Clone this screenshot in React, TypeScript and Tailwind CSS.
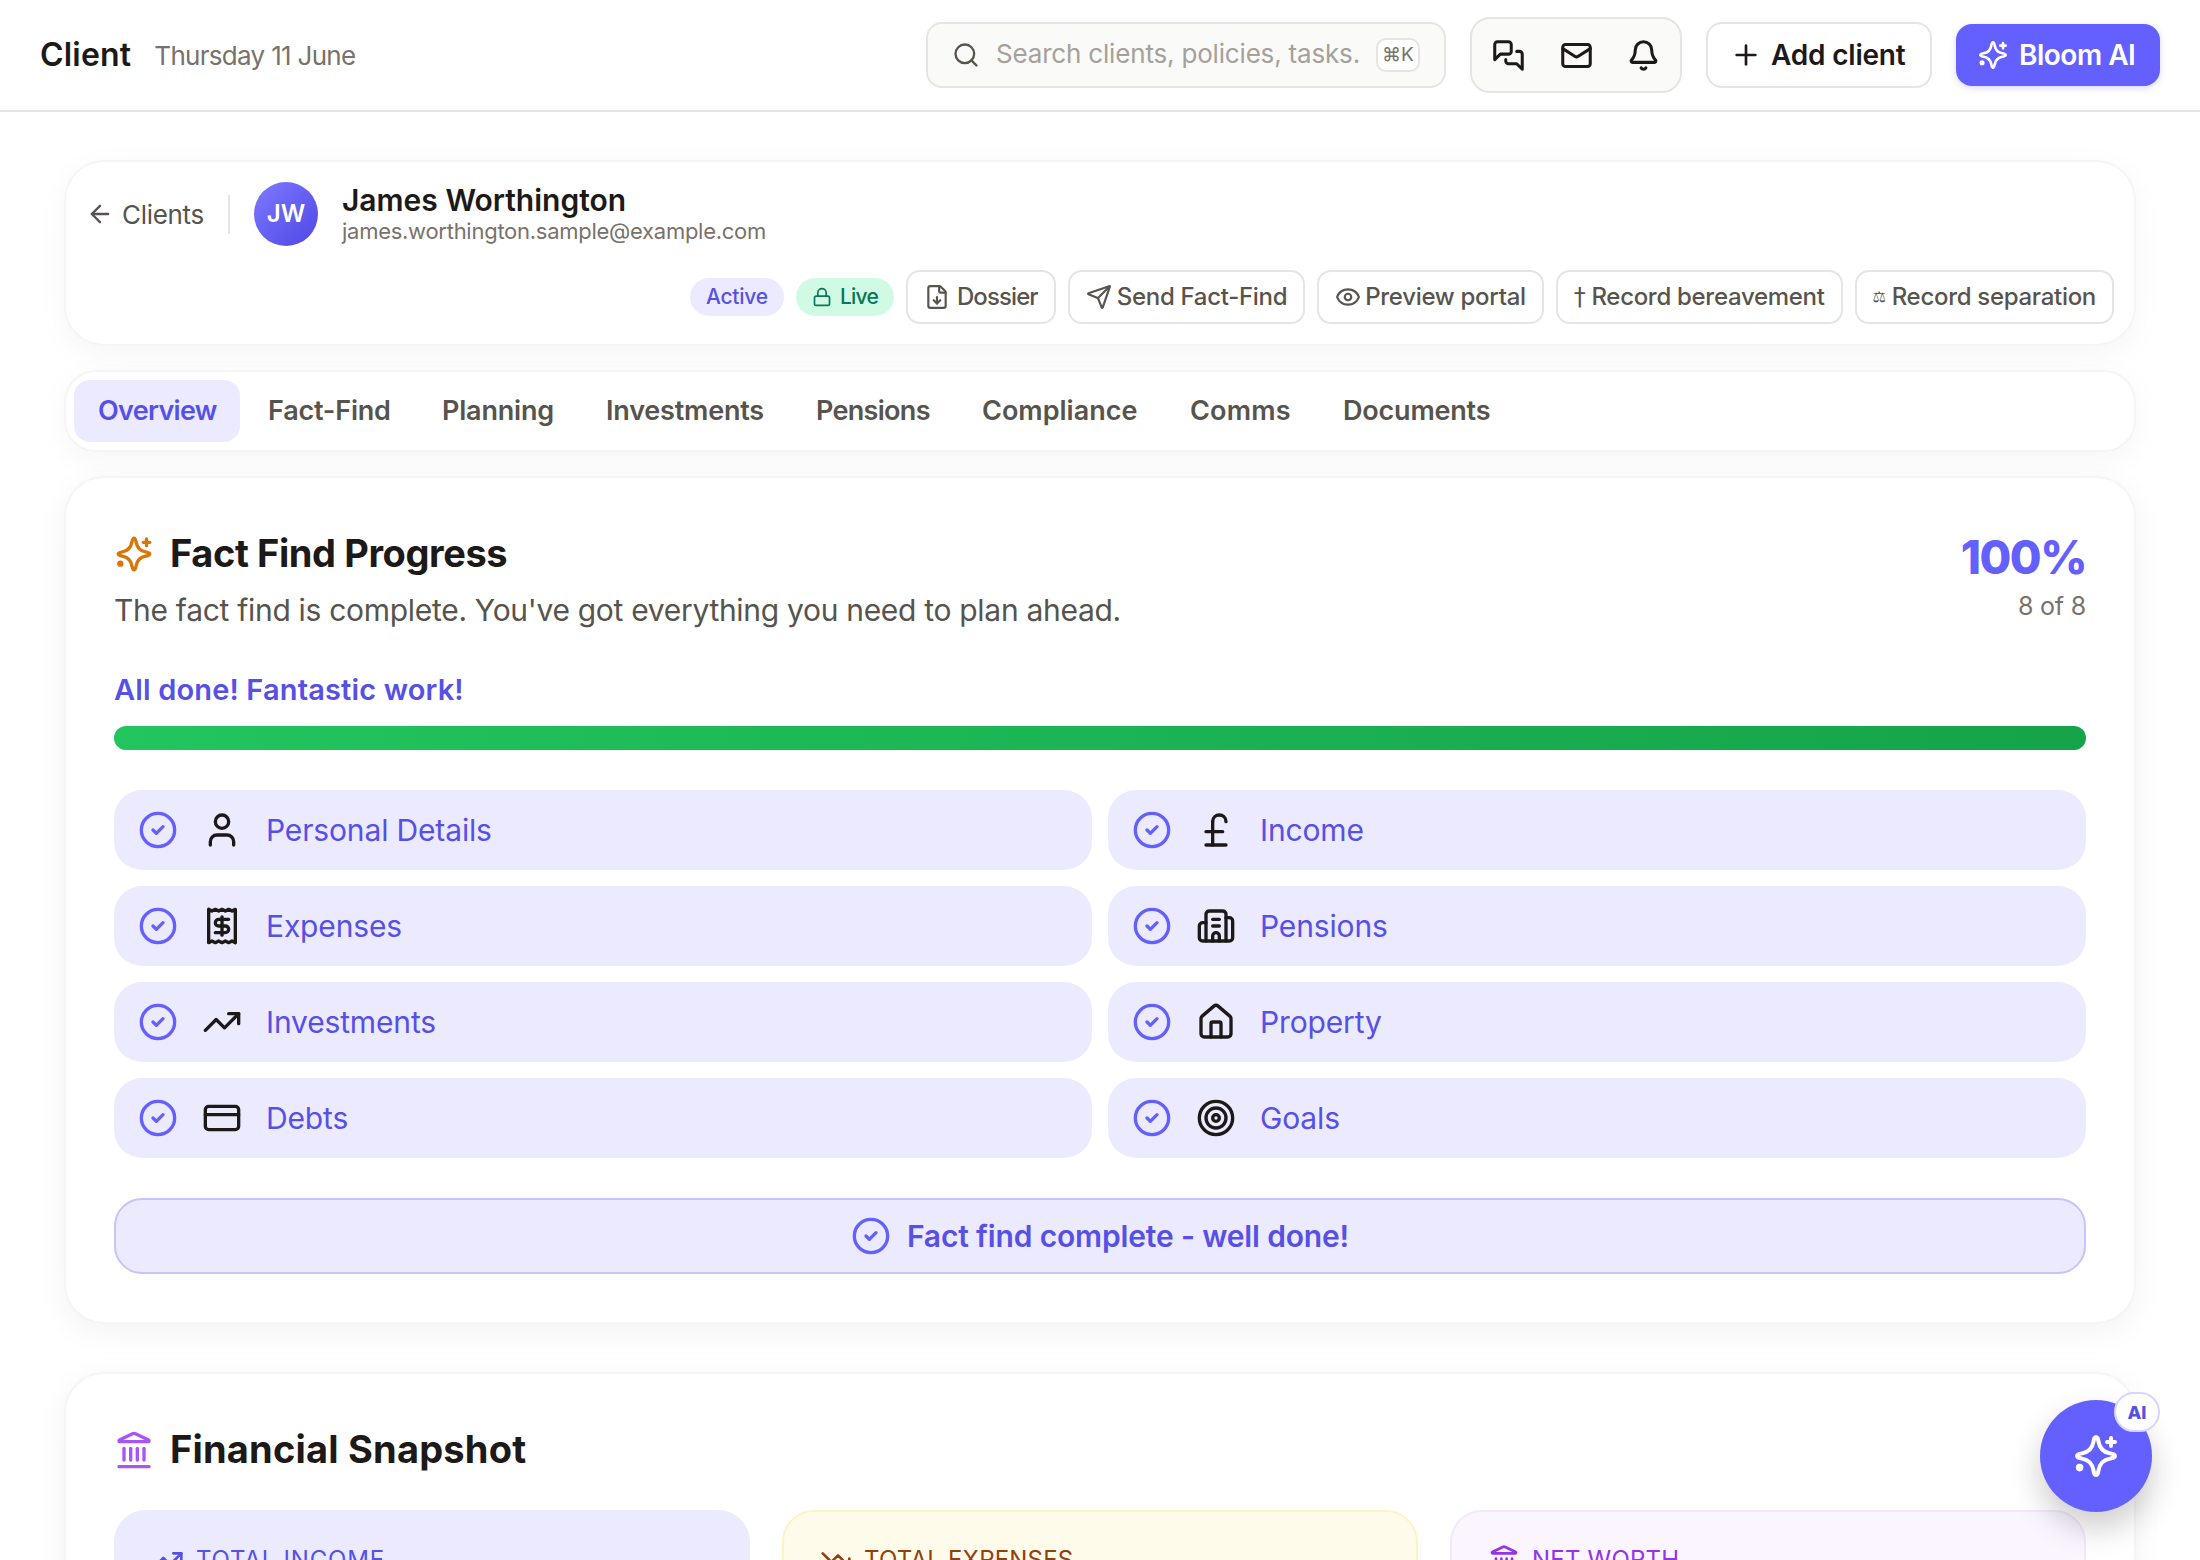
import {
  ArrowLeft,
  Bell,
  Building2,
  CircleCheck,
  CreditCard,
  Eye,
  FileDown,
  House,
  Landmark,
  Lock,
  Mail,
  Plus,
  PoundSterling,
  Receipt,
  Search,
  Send,
  Target,
  TrendingDown,
  TrendingUp,
  User,
} from "lucide-react";

const tabs = [
  { name: "Overview", width: "w-[166px]", track: "tracking-[-0.7px]" },
  { name: "Fact-Find", width: "w-[170px]", track: "tracking-[-0.2px]" },
  { name: "Planning", width: "w-[160px]", track: "tracking-[-0.2px]" },
  { name: "Investments", width: "w-[206px]", track: "tracking-[-0.2px]" },
  { name: "Pensions", width: "w-[162px]", track: "tracking-[-0.7px]" },
  { name: "Compliance", width: "w-[204px]", track: "tracking-[0px]" },
  { name: "Comms", width: "w-[149px]", track: "tracking-[0.2px]" },
  { name: "Documents", width: "w-[196px]", track: "tracking-[-0.2px]" },
];

const sections = [
  { name: "Personal Details", icon: User },
  { name: "Income", icon: PoundSterling },
  { name: "Expenses", icon: Receipt },
  { name: "Pensions", icon: Building2 },
  { name: "Investments", icon: TrendingUp },
  { name: "Property", icon: House },
  { name: "Debts", icon: CreditCard },
  { name: "Goals", icon: Target },
];

const btn =
  "flex h-[54px] items-center rounded-[14px] border-2 border-stone-200 bg-white px-4 text-[24px] font-medium tracking-[-0.3px] text-stone-600";

function Spark({ className }: { className?: string }) {
  return (
    <svg viewBox="0 0 24 24" fill="none" stroke="currentColor" strokeWidth={2} strokeLinecap="round" strokeLinejoin="round" className={className}>
      <path d="M12 2.5C12.8 2.5 13 3.5 13.3 5C13.9 8.3 15.7 10.1 19 10.7C20.5 11 21.5 11.2 21.5 12C21.5 12.8 20.5 13 19 13.3C15.7 13.9 13.9 15.7 13.3 19C13 20.5 12.8 21.5 12 21.5C11.2 21.5 11 20.5 10.7 19C10.1 15.7 8.3 13.9 5 13.3C3.5 13 2.5 12.8 2.5 12C2.5 11.2 3.5 11 5 10.7C8.3 10.1 10.1 8.3 10.7 5C11 3.5 11.2 2.5 12 2.5Z" />
      <path d="M19.5 3v4M17.5 5h4" />
      <circle cx="3.8" cy="17.8" r="0.9" fill="currentColor" />
    </svg>
  );
}

function Chats({ className }: { className?: string }) {
  return (
    <svg viewBox="0 0 24 24" fill="none" stroke="currentColor" strokeWidth={2.2} strokeLinecap="round" strokeLinejoin="round" className={className}>
      <path d="M14 9a2 2 0 0 1-2 2H6l-4 4V4c0-1.1.9-2 2-2h8a2 2 0 0 1 2 2v5Z" />
      <path d="M18 9h2a2 2 0 0 1 2 2v11l-4-4h-6a2 2 0 0 1-2-2v-1" />
    </svg>
  );
}

export default function App() {
  return (
    <div className="relative h-[1560px] overflow-hidden bg-white font-['Inter',sans-serif] text-stone-900">
      <header className="flex h-[112px] items-center justify-between border-b-2 border-stone-200 px-10">
        <div className="flex items-center gap-[23px]">
          <h1 className="text-[32px] font-semibold tracking-[0.2px]">Client</h1>
          <span className="text-[26px] tracking-[-0.7px] text-stone-500">Thursday 11 June</span>
        </div>
        <div className="flex items-center gap-6">
          <div className="flex h-[66px] w-[520px] items-center rounded-2xl border-2 border-stone-200 bg-stone-50 pl-6 pr-6">
            <Search className="h-7 w-7 text-stone-600" strokeWidth={2} />
            <span className="ml-[16px] flex-1 pb-[3px] text-[26px] tracking-[-0.18px] text-stone-400">Search clients, policies, tasks.</span>
            <kbd className="flex h-[34px] w-[44px] items-center justify-center rounded-[10px] border-2 border-stone-200 bg-white font-['Inter',sans-serif] text-[19px] text-stone-500">
              ⌘K
            </kbd>
          </div>
          <div className="flex h-[76px] w-[212px] items-center justify-between rounded-[20px] border-2 border-stone-200 bg-stone-50 px-5">
            <Chats className="h-[33px] w-[33px]" />
            <Mail className="h-[33px] w-[33px]" strokeWidth={2.2} />
            <Bell className="h-[33px] w-[33px]" strokeWidth={2.2} />
          </div>
          <button className="flex h-[66px] w-[226px] items-center gap-[9px] rounded-2xl border-2 border-stone-200 bg-white pl-[22px] text-[28px] font-semibold tracking-[-0.2px]">
            <Plus className="h-8 w-8" strokeWidth={2} />
            Add client
          </button>
          <button className="flex h-[62px] w-[204px] items-center gap-[10px] rounded-2xl bg-[#6360ff] pl-[21px] text-[28px] font-semibold tracking-[-0.5px] text-white shadow-[0_2px_6px_rgba(99,96,255,0.25)]">
            <Spark className="h-8 w-8" />
            Bloom AI
          </button>
        </div>
      </header>

      <main className="flex flex-col px-16 pt-12">
        <section className="flex flex-col gap-6 rounded-[40px] border-2 border-stone-100 bg-white p-5 shadow-[0_8px_32px_rgba(0,0,0,0.04)]">
          <div className="flex h-16 items-center">
            <div className="flex items-center gap-2 border-r-2 border-stone-200 pr-6 text-[26px] tracking-[-0.3px] text-stone-600">
              <ArrowLeft className="h-7 w-7" strokeWidth={2} />
              Clients
            </div>
            <div className="ml-6 flex h-16 w-16 items-center justify-center rounded-full bg-gradient-to-br from-[#7f78ff] to-[#4f46e5] text-[24px] font-semibold text-white">
              JW
            </div>
            <div className="ml-[24px] mb-[2px] flex flex-col">
              <span className="text-[30px] font-semibold leading-[36px]">James Worthington</span>
              <span className="text-[22px] leading-[26px] tracking-[-0.27px] text-stone-500">james.worthington.sample@example.com</span>
            </div>
          </div>
          <div className="flex items-center justify-end gap-[12px]">
            <span className="flex h-[38px] items-center rounded-full bg-[#eceafe] px-4 text-[21px] font-medium tracking-[-0.2px] text-[#5650e6]">
              Active
            </span>
            <span className="flex h-[38px] items-center gap-2 rounded-full bg-[#d1fae5] px-4 text-[21px] font-medium tracking-[-0.8px] text-[#047857]">
              <Lock className="h-5 w-5" strokeWidth={2} />
              Live
            </span>
            <button className={`${btn} gap-[7px] tracking-[-0.9px]`}>
              <FileDown className="h-[26px] w-[26px]" strokeWidth={2} />
              Dossier
            </button>
            <button className={`${btn} gap-[5px]`}>
              <Send className="h-[26px] w-[26px]" strokeWidth={2} />
              Send Fact-Find
            </button>
            <button className={`${btn} gap-[4px]`}>
              <Eye className="h-[26px] w-[26px]" strokeWidth={2} />
              Preview portal
            </button>
            <button className={`${btn} gap-[6px]`}>
              <span className="font-['DejaVu_Sans',sans-serif] font-normal">†</span>
              Record bereavement
            </button>
            <button className={`${btn} gap-[6px]`}>
              <span className="font-['DejaVu_Sans',sans-serif] text-[15px] font-normal">⚖</span>
              Record separation
            </button>
          </div>
        </section>

        <nav className="mt-6 flex gap-1 rounded-[32px] border-2 border-stone-100 bg-white p-2 shadow-[0_8px_32px_rgba(0,0,0,0.04)]">
          {tabs.map((tab, i) => (
            <div
              key={tab.name}
              className={`flex h-[62px] items-center whitespace-nowrap rounded-2xl px-6 text-[27px] font-semibold ${tab.track} ${tab.width} ${
                i === 0 ? "bg-[#eceafe] text-[#5650e6]" : "text-stone-600"
              }`}
            >
              {tab.name}
            </div>
          ))}
        </nav>

        <section className="mt-6 rounded-[40px] border-2 border-stone-100 bg-white p-12 shadow-[0_8px_32px_rgba(0,0,0,0.05)]">
          <div className="flex items-start justify-between">
            <div>
              <div className="flex h-14 items-center gap-4">
                <Spark className="h-10 w-10 text-[#d97706]" />
                <h2 className="pb-[2px] text-[38px] font-bold tracking-[-0.4px]">Fact Find Progress</h2>
              </div>
              <p className="mt-[6px] text-[30px] leading-[44px] tracking-[-0.3px] text-stone-600">
                The fact find is complete. You've got everything you need to plan ahead.
              </p>
            </div>
            <div className="flex flex-col items-end">
              <span className="text-[46px] font-extrabold leading-[62px] tracking-[-1.5px] text-[#6360ff]">100%</span>
              <span className="text-[25px] leading-[36px] tracking-[-0.2px] text-stone-500">8 of 8</span>
            </div>
          </div>

          <p className="mt-[37px] text-[29px] font-semibold leading-[42px] tracking-[0.15px] text-[#5650e6]">All done! Fantastic work!</p>
          <div className="mt-[15px] h-6 rounded-full bg-gradient-to-r from-[#22c55e] to-[#16a34a]" />

          <div className="mt-10 grid grid-cols-2 gap-4">
            {sections.map((s) => (
              <div key={s.name} className="flex h-20 items-center rounded-[28px] bg-[#eceafe] pl-6">
                <CircleCheck className="h-10 w-10 text-[#6360ff]" strokeWidth={2} />
                <s.icon className="ml-6 h-10 w-10 text-stone-900" strokeWidth={2} />
                <span className="ml-6 text-[30px] tracking-[-0.15px] text-[#5650e6]">{s.name}</span>
              </div>
            ))}
          </div>

          <div className="mt-10 flex h-[76px] items-center justify-center gap-4 rounded-[28px] border-2 border-[#c7c4fb] bg-[#eceafe] text-[30px] font-semibold tracking-[-0.15px] text-[#5650e6]">
            <CircleCheck className="h-10 w-10 text-[#6360ff]" strokeWidth={2} />
            Fact find complete - well done!
          </div>
        </section>

        <section className="mt-12 rounded-[40px] border-2 border-stone-100 bg-white p-12 shadow-[0_8px_32px_rgba(0,0,0,0.05)]">
          <div className="flex h-14 items-center gap-4">
            <Landmark className="h-10 w-10 text-[#a855f7]" strokeWidth={2} />
            <h2 className="pb-[2px] text-[38px] font-bold tracking-[0.2px]">Financial Snapshot</h2>
          </div>
          <div className="mt-8 grid grid-cols-3 gap-8">
            <div className="rounded-[32px] border-2 border-[#eceafe] bg-[#eceafe] px-9 py-8">
              <div className="flex h-8 items-center gap-3 text-[24px] uppercase tracking-[0.8px] text-[#5650e6]">
                <TrendingUp className="h-8 w-8" strokeWidth={2} />
                Total Income
              </div>
            </div>
            <div className="rounded-[32px] border-2 border-[#fef3c7] bg-[#fffbeb] px-9 py-8">
              <div className="flex h-8 items-center gap-3 text-[24px] uppercase tracking-[0.2px] text-[#92400e]">
                <TrendingDown className="h-8 w-8" strokeWidth={2} />
                Total Expenses
              </div>
            </div>
            <div className="rounded-[32px] border-2 border-[#f3e8ff] bg-[#faf5ff] px-9 py-8">
              <div className="flex h-8 items-center gap-3 text-[24px] uppercase tracking-[0.2px] text-[#9333ea]">
                <Landmark className="h-8 w-8" strokeWidth={2} />
                Net Worth
              </div>
            </div>
          </div>
        </section>
      </main>

      <button className="absolute left-[2040px] top-[1400px] flex h-[112px] w-[112px] items-center justify-center rounded-full bg-[#6360ff] text-white shadow-[0_16px_32px_rgba(0,0,0,0.2)]">
        <Spark className="h-12 w-12" />
        <span className="absolute -right-2 -top-2 flex h-10 w-[46px] items-center justify-center rounded-full border-2 border-[#d8d6fd] bg-white text-[18px] font-extrabold text-[#5650e6]">
          AI
        </span>
      </button>
    </div>
  );
}
